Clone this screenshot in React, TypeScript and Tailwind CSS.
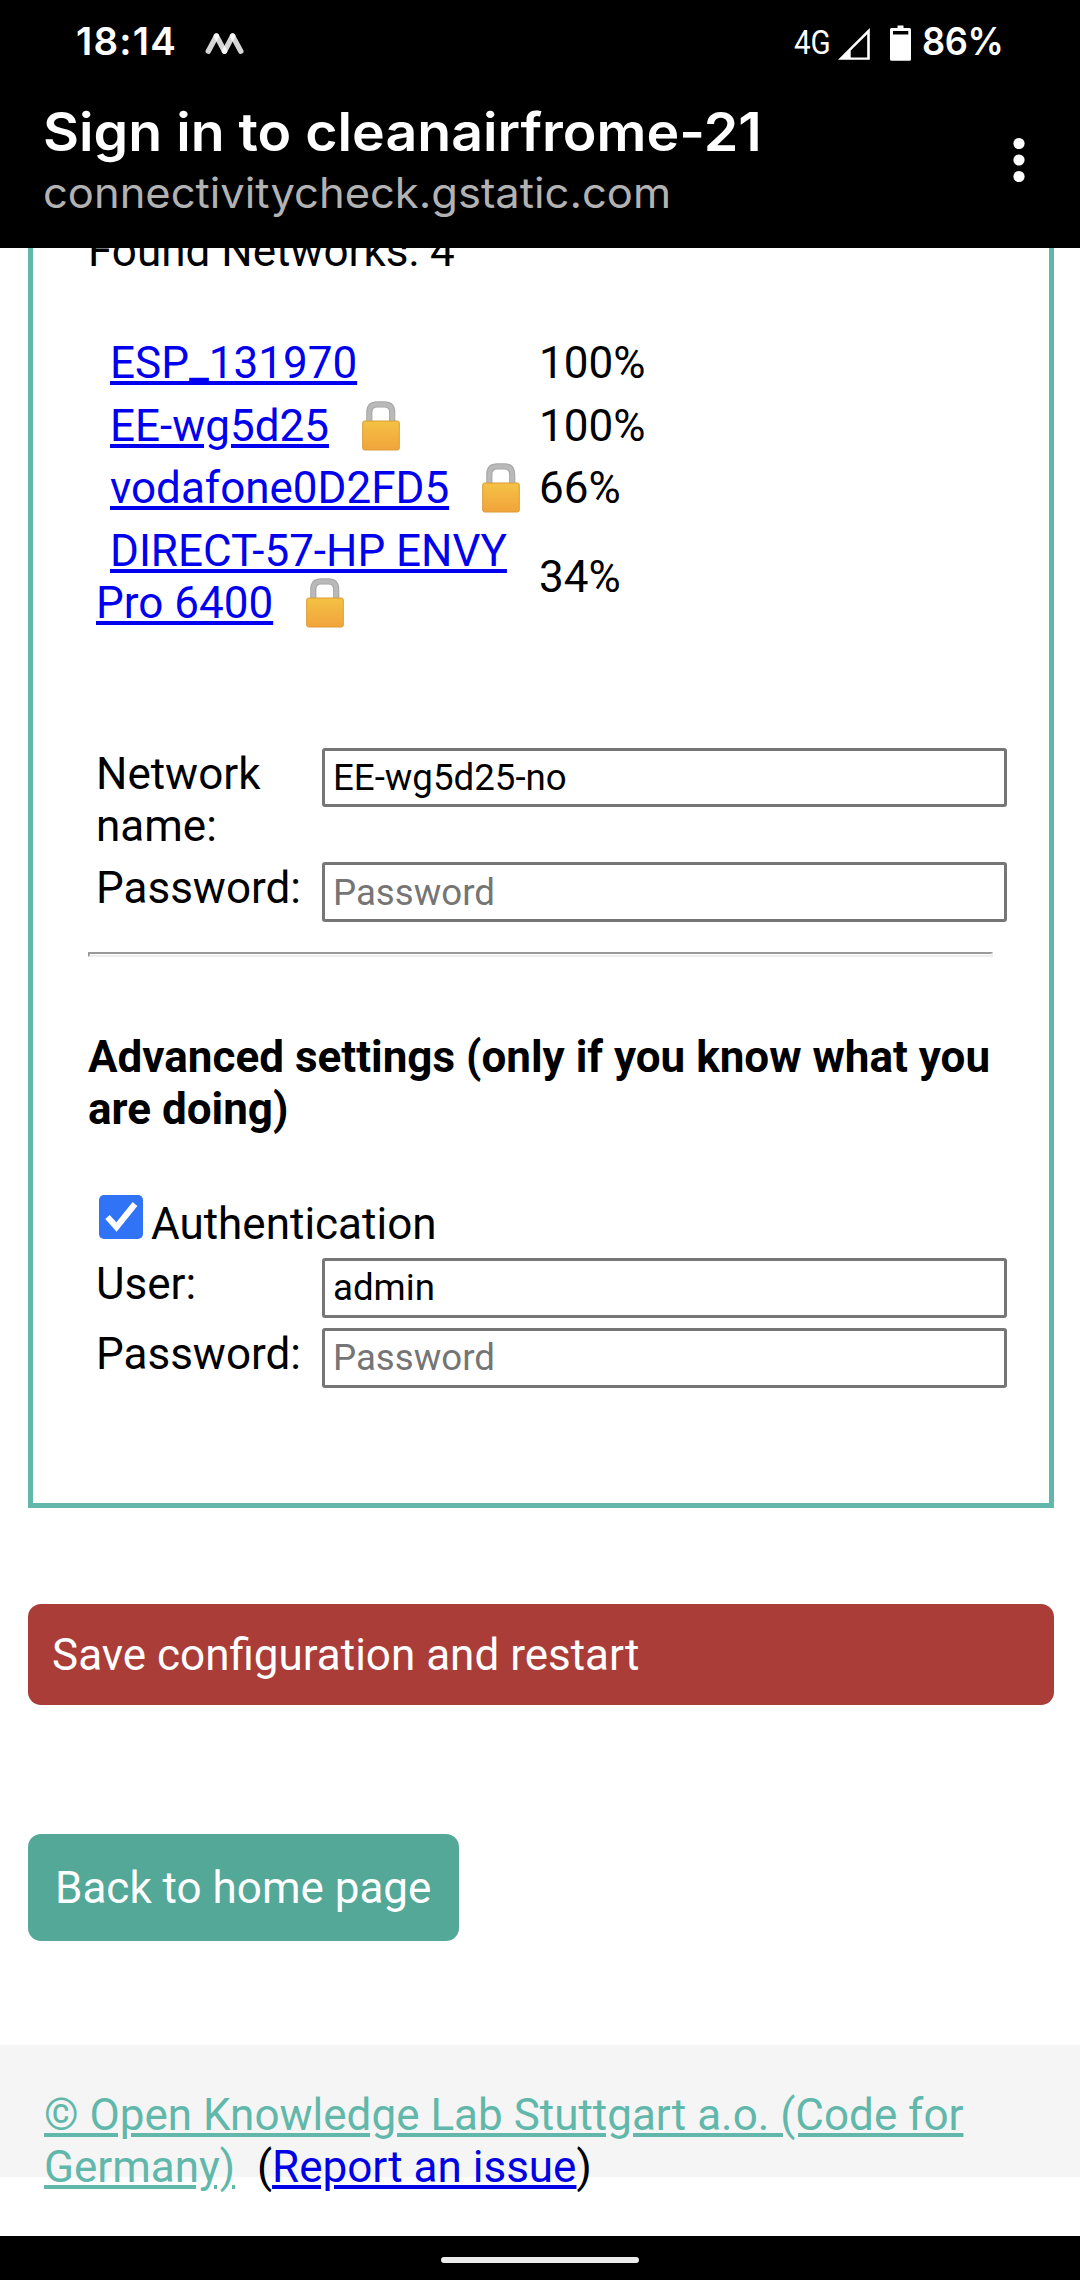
import React from "react";

function StatusBar() {
  return (
    <div className="flex h-[84px] items-start text-white">
      <div className="ml-[76px] mt-[17px] w-[129px] whitespace-nowrap font-['Inter'] text-[38.5px] leading-[48px] font-semibold tracking-[1.2px]">
        18:14
      </div>
      <svg className="mt-[30px]" width="40" height="28" viewBox="205 30 40 28" fill="none" stroke="#fff" strokeOpacity="0.84" strokeWidth="5.4" strokeLinecap="round">
        <path d="M208.3 51.2L216.4 36" />
        <path d="M216.4 36L224.5 51.2" />
        <path d="M224.5 51.2L232.6 36" />
        <path d="M232.6 36L240.8 51.2" />
      </svg>
      <div className="ml-[549px] mt-[22px] w-[44px] origin-left scale-x-[0.87] font-['Roboto'] text-[34px] leading-[40px]">
        4G
      </div>
      <svg className="mt-[22px]" width="80" height="42" viewBox="838 22 80 42">
        <path fill="#fff" fillRule="evenodd" d="M869.8 28V59.8H838zM867.2 34.2L850.7 50.5V57.4H867.2z" />
        <path fill="#fff" fillRule="evenodd" d="M897.5 28V25.6H903.5V28H909.5Q911 28 911 29.5V59.2Q911 60.7 909.5 60.7H891.5Q890 60.7 890 59.2V29.5Q890 28 891.5 28zM893 31V34.6H908.3V31z" />
      </svg>
      <div className="ml-[4px] mt-[17px] origin-left scale-x-[0.94] whitespace-nowrap font-['Inter'] text-[38.5px] leading-[48px] font-semibold tracking-[-0.5px]">
        86%
      </div>
    </div>
  );
}

function Header() {
  return (
    <header className="h-[248px] bg-black">
      <StatusBar />
      <div className="flex justify-between">
        <div className="ml-[43px] mt-[16px] whitespace-nowrap font-['Inter']">
          <h1 className="h-[64px] origin-left scale-x-[1.046] text-[53px] leading-[64px] font-semibold text-white">
            Sign in to cleanairfrome-21
          </h1>
          <p className="origin-left scale-x-[1.036] text-[42px] leading-[58px] text-[#b2b2b2]">connectivitycheck.gstatic.com</p>
        </div>
        <svg className="mt-[50px] mr-[51px]" width="20" height="52" viewBox="0 0 20 52" fill="#fff">
          <circle cx="10" cy="9.5" r="5.6" />
          <circle cx="10" cy="26" r="5.6" />
          <circle cx="10" cy="42.5" r="5.6" />
        </svg>
      </div>
    </header>
  );
}

function Lock() {
  return (
    <svg className="-mt-[12px] -mb-[2px] ml-[32px] inline-block align-[-8px]" width="40" height="50" viewBox="0 0 40 50">
      <defs>
        <linearGradient id="lockBody" x1="0" y1="0" x2="0" y2="1">
          <stop offset="0" stopColor="#f4c244" />
          <stop offset="1" stopColor="#f1a33b" />
        </linearGradient>
      </defs>
      <path d="M8.3 22V11.5Q8.3 3.3 16.3 3.3H23.2Q31.2 3.3 31.2 11.5V22" fill="none" stroke="#a6a6a6" strokeWidth="6.2" />
      <path d="M8.3 22V11.5Q8.3 3.3 16.3 3.3H23.2Q31.2 3.3 31.2 11.5V22" fill="none" stroke="#b9b9b9" strokeWidth="4.2" />
      <rect x="1.7" y="20" width="36.6" height="29" rx="2" fill="url(#lockBody)" stroke="#dc9a35" strokeWidth="1" />
    </svg>
  );
}

function Network({ name, strength, locked, gap }: { name: string; strength: string; locked?: boolean; gap: string }) {
  return (
    <div className={`flex items-center ${gap}`}>
      <div className="w-[451px] shrink-0 pr-[10px] pl-[8px]">
        <a href="#" className="ml-[14px] text-[#0000ee] underline">
          {name}
        </a>
        {locked && <Lock />}
      </div>
      <span>{strength}</span>
    </div>
  );
}

function Field({ label, value, placeholder, height, className }: { label: React.ReactNode; value?: string; placeholder?: string; height: string; className: string }) {
  return (
    <label className={`flex items-start ${className}`}>
      <span className="w-[234px] shrink-0 pl-[8px]">{label}</span>
      <input
        className={`w-[685px] shrink-0 rounded-[3px] border-[3px] border-[#767676] bg-white px-[8px] text-[36.67px] text-black placeholder:text-[#757575] ${height}`}
        defaultValue={value}
        placeholder={placeholder}
      />
    </label>
  );
}

export default function App() {
  return (
    <div className="flex h-[2280px] w-[1080px] flex-col overflow-hidden bg-white font-['Roboto',sans-serif] text-[44px] leading-[52px] text-black">
      <Header />
      <main className="h-[1988px] overflow-hidden">
        <section className="mx-[28px] h-[1260px] w-[1026px] overflow-hidden border-x-[5px] border-b-[5px] border-[#61b8aa] pl-[55px]">
          <p className="-mt-[23px]">Found Networks: 4</p>

          <div className="mt-[60px] h-[411px]">
            <Network name="ESP_131970" strength="100%" gap="h-[52px]" />
            <Network name="EE-wg5d25" strength="100%" locked gap="mt-[11px] h-[52px]" />
            <Network name="vodafone0D2FD5" strength="66%" locked gap="mt-[10px] h-[52px]" />
            <Network name="DIRECT-57-HP ENVY Pro 6400" strength="34%" locked gap="mt-[11px] h-[104px]" />
          </div>

          <Field label={<>Network<br />name:</>} value="EE-wg5d25-no" height="h-[59px]" className="h-[114px]" />
          <Field label="Password:" placeholder="Password" height="h-[60px]" className="h-[90px]" />
          <div className="h-[5px] w-[905px] border-2 border-t-[#9a9a9a] border-r-[#eeeeee] border-b-[#eeeeee] border-l-[#9a9a9a]" />

          <h2 className="mt-[74px] w-[930px] font-bold">
            Advanced settings (only if you know what you are doing)
          </h2>

          <div className="mt-[60px] flex h-[63px] items-start pl-[11px]">
            <svg className="shrink-0" width="44" height="44" viewBox="0 0 44 44">
              <rect width="44" height="44" rx="5" fill="#3173f6" />
              <path d="M8.5 22L17.5 32L36 9" fill="none" stroke="#fff" strokeWidth="6" />
            </svg>
            <span className="mt-[3px] ml-[8px]">Authentication</span>
          </div>
          <Field label="User:" value="admin" height="h-[60px] pb-[2px]" className="h-[70px]" />
          <Field label="Password:" placeholder="Password" height="h-[60px] pb-[2px]" className="h-[60px]" />
        </section>

        <button className="mx-[28px] mt-[96px] block h-[101px] w-[1026px] rounded-[13px] bg-[#ab3d39] pl-[24px] text-left text-white">
          Save configuration and restart
        </button>
        <button className="ml-[28px] mt-[129px] block h-[107px] w-[431px] rounded-[13px] bg-[#53a898] pl-[27px] text-left whitespace-nowrap text-white">
          Back to home page
        </button>

        <footer className="mt-[104px] h-[132px] bg-[#f5f5f5] px-[44px] pt-[44px]">
          <a href="#" className="text-[#61b8aa] underline">
            © Open Knowledge Lab Stuttgart a.o. (Code for Germany)
          </a>
          &nbsp; (
          <a href="#" className="text-[#0000e4] underline">
            Report an issue
          </a>
          )
        </footer>
      </main>
      <nav className="flex h-[44px] justify-center bg-black pt-[21px]">
        <div className="h-[6px] w-[198px] rounded-full bg-[#ececec]" />
      </nav>
    </div>
  );
}
